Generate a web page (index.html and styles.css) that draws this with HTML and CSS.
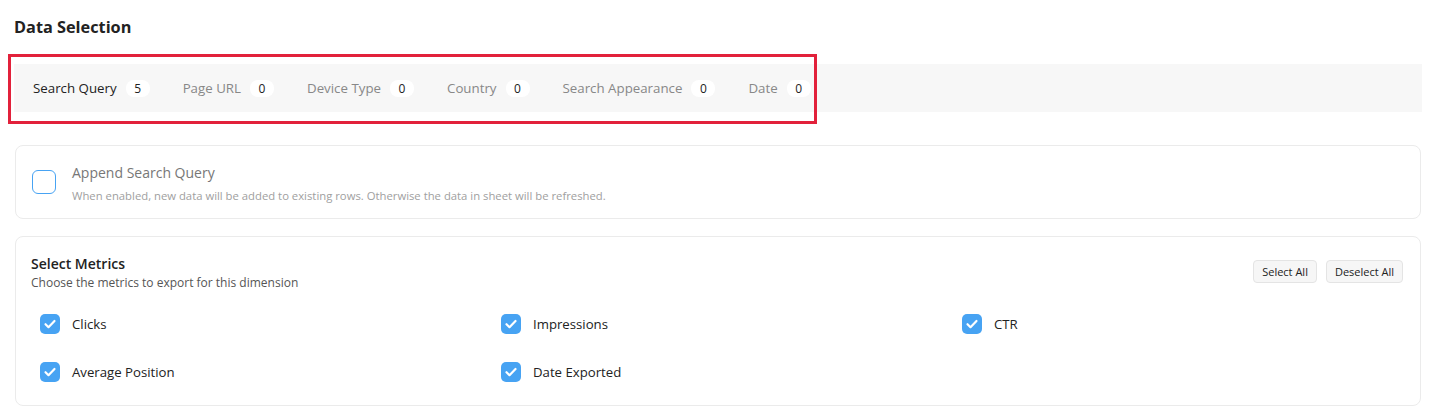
FILE: index.html
```html
<!DOCTYPE html>
<html lang="en">
<head>
    <meta charset="UTF-8">
    <meta name="viewport" content="width=device-width, initial-scale=1.0">
    <link rel="stylesheet" href="styles.css">
</head>
<body>
    <h2 class="page-title">Data Selection</h2>

    <div class="tabs-wrap">
        <nav class="tabs">
            <div class="tab active">Search Query <span class="badge">5</span></div>
            <div class="tab">Page URL <span class="badge">0</span></div>
            <div class="tab">Device Type <span class="badge">0</span></div>
            <div class="tab">Country <span class="badge">0</span></div>
            <div class="tab">Search Appearance <span class="badge">0</span></div>
            <div class="tab">Date <span class="badge">0</span></div>
        </nav>
        <div class="highlight"></div>
    </div>

    <section class="card append">
        <div class="toggle-box"></div>
        <div class="append-text">
            <div class="append-title">Append Search Query</div>
            <div class="append-sub">When enabled, new data will be added to existing rows. Otherwise the data in sheet will be refreshed.</div>
        </div>
    </section>

    <section class="card metrics">
        <div class="metrics-head">
            <div>
                <div class="metrics-title">Select Metrics</div>
                <div class="metrics-sub">Choose the metrics to export for this dimension</div>
            </div>
            <div class="actions">
                <button class="btn">Select All</button>
                <button class="btn">Deselect All</button>
            </div>
        </div>
        <div class="metric-grid">
            <label class="metric"><span class="check"><svg viewBox="0 0 20 20"><path d="M5.5 10.2l3 3 6-6.2"/></svg></span>Clicks</label>
            <label class="metric"><span class="check"><svg viewBox="0 0 20 20"><path d="M5.5 10.2l3 3 6-6.2"/></svg></span>Impressions</label>
            <label class="metric"><span class="check"><svg viewBox="0 0 20 20"><path d="M5.5 10.2l3 3 6-6.2"/></svg></span>CTR</label>
            <label class="metric"><span class="check"><svg viewBox="0 0 20 20"><path d="M5.5 10.2l3 3 6-6.2"/></svg></span>Average Position</label>
            <label class="metric"><span class="check"><svg viewBox="0 0 20 20"><path d="M5.5 10.2l3 3 6-6.2"/></svg></span>Date Exported</label>
        </div>
    </section>
</body>
</html>
```

FILE: styles.css
```css
* {
    margin: 0;
    padding: 0;
    box-sizing: border-box;
}

:root {
    --blue: #47a3f3;
    --border: #ebebeb;
    --text: #222;
    --muted: #888;
}

body {
    font-family: "Open Sans", "Noto Sans", sans-serif;
    color: var(--text);
    background: white;
    padding: 0 14px;
}

.page-title {
    font-size: 16.3px;
    font-weight: 700;
    line-height: 24px;
    padding-top: 15px;
}

.tabs-wrap {
    position: relative;
    margin-top: 25px;
}

.tabs {
    display: flex;
    align-items: center;
    gap: 33px;
    height: 48px;
    padding-left: 19px;
    background-color: #f7f7f7;
}

.tab {
    display: flex;
    align-items: center;
    font-size: 13.3px;
    color: var(--muted);
}

.tab.active {
    color: var(--text);
}

.badge {
    display: inline-flex;
    align-items: center;
    justify-content: center;
    width: 24px;
    height: 17px;
    margin-left: 9px;
    border-radius: 8px;
    background: white;
    color: var(--text);
    font-size: 12px;
}

.highlight {
    position: absolute;
    left: -6px;
    top: -10px;
    width: 809px;
    height: 70px;
    border: 3px solid #e2213b;
    pointer-events: none;
}

.card {
    margin: 0 1px;
    border: 1px solid var(--border);
    border-radius: 8px;
    background: white;
}

.append {
    margin-top: 33px;
    height: 74px;
    display: flex;
    align-items: center;
    padding: 0 16px;
    gap: 16px;
}

.toggle-box {
    width: 24px;
    height: 24px;
    border: 1.5px solid var(--blue);
    border-radius: 6px;
    flex-shrink: 0;
}

.append-text {
    padding-top: 3px;
}

.append-title {
    font-size: 14px;
    font-weight: 500;
    color: #777;
    line-height: 20px;
}

.append-sub {
    font-size: 11.3px;
    color: #a0a0a0;
    line-height: 18px;
    margin-top: 4px;
}

.metrics {
    margin-top: 17px;
    padding: 17px 17px 9px 15px;
}

.metrics-head {
    display: flex;
    justify-content: space-between;
    align-items: flex-start;
}

.metrics-title {
    font-size: 14px;
    font-weight: 600;
    line-height: 20px;
}

.metrics-sub {
    font-size: 12px;
    color: #555;
    line-height: 18px;
}

.actions {
    display: flex;
    gap: 9px;
    margin-top: 6px;
}

.btn {
    font-family: inherit;
    font-size: 11px;
    color: var(--text);
    height: 23px;
    padding: 0 8px;
    background: #f6f6f6;
    border: 1px solid #e4e4e4;
    border-radius: 4px;
    cursor: pointer;
}

.metric-grid {
    display: grid;
    grid-template-columns: repeat(3, 1fr);
    grid-auto-rows: 48px;
    column-gap: 20px;
    margin-top: 8px;
    padding-left: 9px;
}

.metric {
    display: flex;
    align-items: center;
    gap: 12px;
    font-size: 13.2px;
    color: var(--text);
}

.check {
    width: 20px;
    height: 20px;
    border-radius: 5px;
    background: var(--blue);
    display: flex;
    flex-shrink: 0;
}

.check svg {
    width: 20px;
    height: 20px;
    fill: none;
    stroke: white;
    stroke-width: 2.2;
    stroke-linecap: round;
    stroke-linejoin: round;
}
```
